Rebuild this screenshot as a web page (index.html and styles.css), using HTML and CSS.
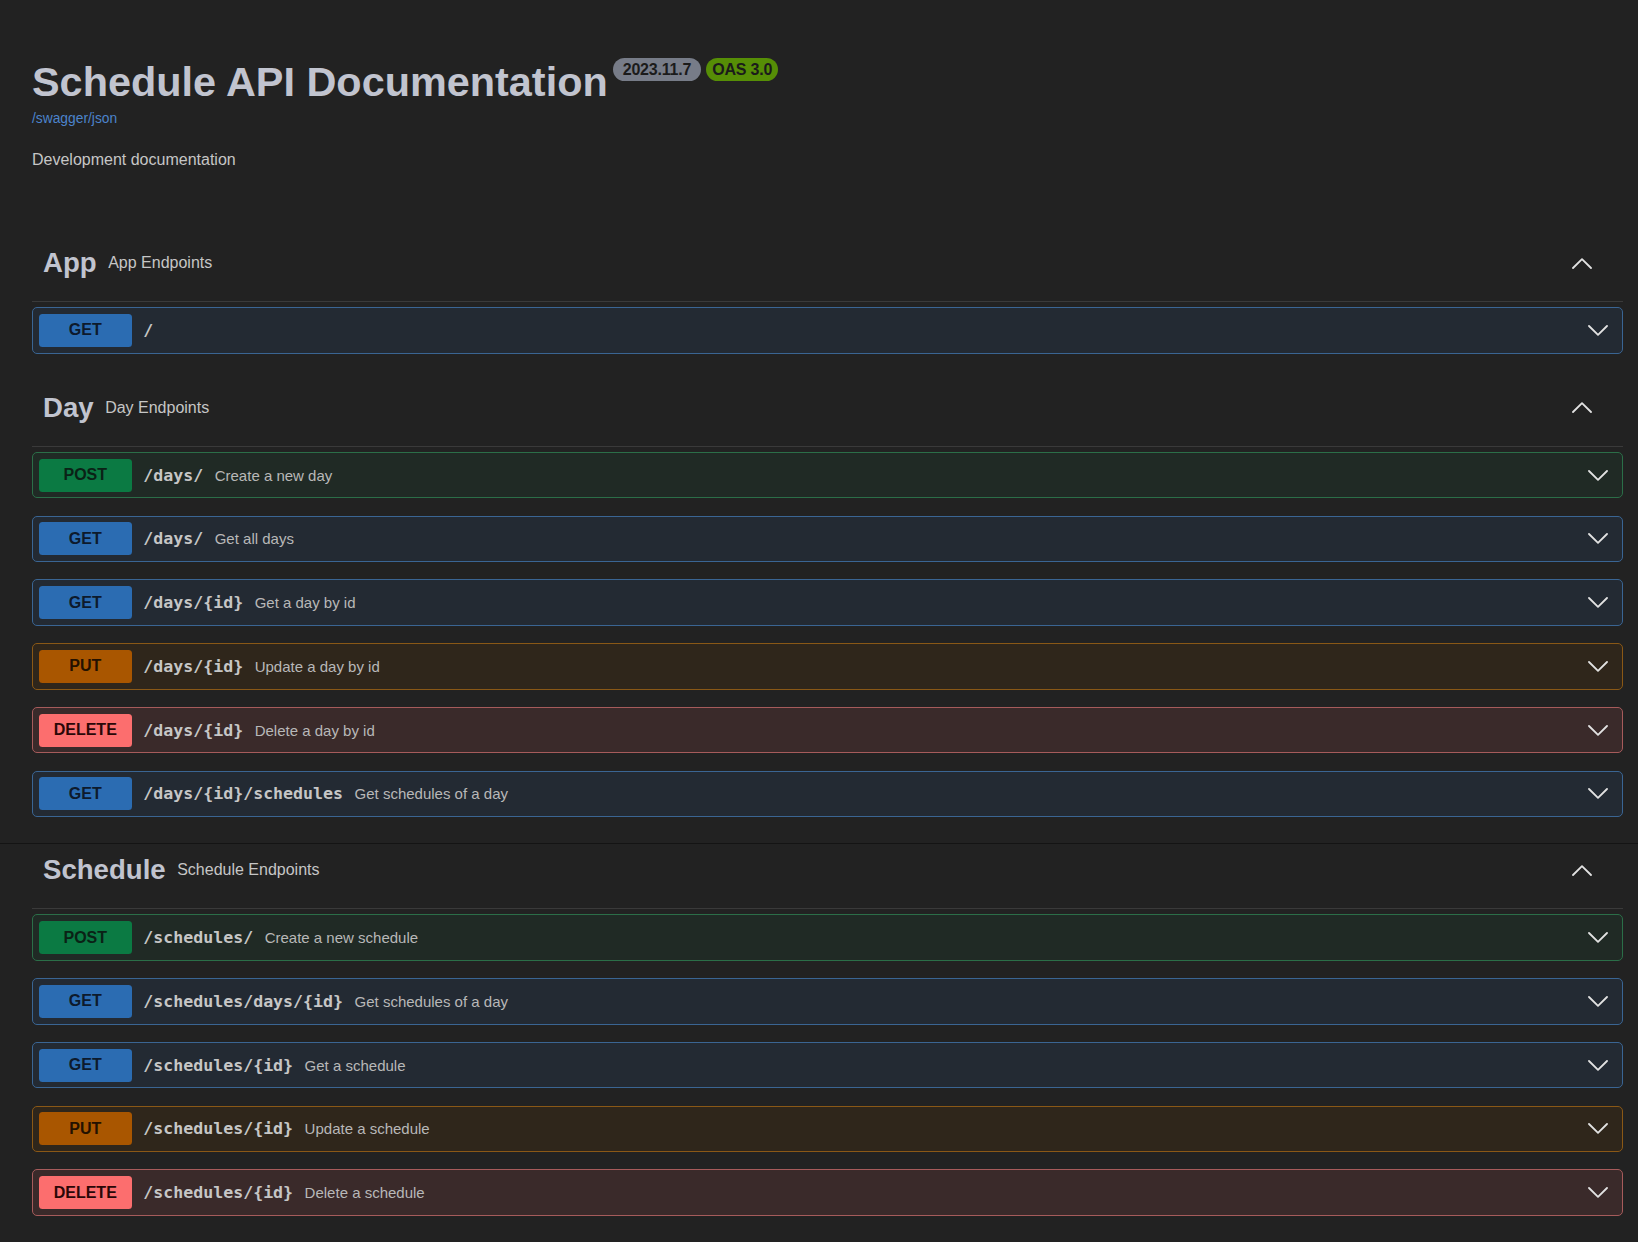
FILE: index.html
```html
<!DOCTYPE html>
<html lang="en">
<head>
<meta charset="utf-8">
<title>Schedule API Documentation</title>
<link rel="stylesheet" href="styles.css">
</head>
<body>
<div class="page">
  <section class="info">
    <div class="title-row">
      <h1 class="title">Schedule API Documentation</h1>
      <span class="pill pill-version">2023.11.7</span>
      <span class="pill pill-oas">OAS 3.0</span>
    </div>
    <a class="spec-link" href="#">/swagger/json</a>
    <p class="desc">Development documentation</p>
  </section>

  <section class="tag">
    <div class="tag-header">
      <h3 class="tag-name">App</h3>
      <span class="tag-desc">App Endpoints</span>
      <svg class="tag-arrow" viewBox="0 0 20 11"><polyline points="1,10 10,1.2 19,10"/></svg>
    </div>
    <div class="op op-get"><span class="method">GET</span><span class="path">/</span><span class="summary"></span><svg class="op-arrow" viewBox="0 0 20 11"><polyline points="1,1 10,9.8 19,1"/></svg></div>
  </section>

  <section class="tag">
    <div class="tag-header">
      <h3 class="tag-name">Day</h3>
      <span class="tag-desc">Day Endpoints</span>
      <svg class="tag-arrow" viewBox="0 0 20 11"><polyline points="1,10 10,1.2 19,10"/></svg>
    </div>
    <div class="op op-post"><span class="method">POST</span><span class="path">/days/</span><span class="summary">Create a new day</span><svg class="op-arrow" viewBox="0 0 20 11"><polyline points="1,1 10,9.8 19,1"/></svg></div>
    <div class="op op-get"><span class="method">GET</span><span class="path">/days/</span><span class="summary">Get all days</span><svg class="op-arrow" viewBox="0 0 20 11"><polyline points="1,1 10,9.8 19,1"/></svg></div>
    <div class="op op-get"><span class="method">GET</span><span class="path">/days/{id}</span><span class="summary">Get a day by id</span><svg class="op-arrow" viewBox="0 0 20 11"><polyline points="1,1 10,9.8 19,1"/></svg></div>
    <div class="op op-put"><span class="method">PUT</span><span class="path">/days/{id}</span><span class="summary">Update a day by id</span><svg class="op-arrow" viewBox="0 0 20 11"><polyline points="1,1 10,9.8 19,1"/></svg></div>
    <div class="op op-delete"><span class="method">DELETE</span><span class="path">/days/{id}</span><span class="summary">Delete a day by id</span><svg class="op-arrow" viewBox="0 0 20 11"><polyline points="1,1 10,9.8 19,1"/></svg></div>
    <div class="op op-get"><span class="method">GET</span><span class="path">/days/{id}/schedules</span><span class="summary">Get schedules of a day</span><svg class="op-arrow" viewBox="0 0 20 11"><polyline points="1,1 10,9.8 19,1"/></svg></div>
  </section>

  <div class="divider"></div>

  <section class="tag">
    <div class="tag-header tag-header-compact">
      <h3 class="tag-name">Schedule</h3>
      <span class="tag-desc">Schedule Endpoints</span>
      <svg class="tag-arrow" viewBox="0 0 20 11"><polyline points="1,10 10,1.2 19,10"/></svg>
    </div>
    <div class="op op-post"><span class="method">POST</span><span class="path">/schedules/</span><span class="summary">Create a new schedule</span><svg class="op-arrow" viewBox="0 0 20 11"><polyline points="1,1 10,9.8 19,1"/></svg></div>
    <div class="op op-get"><span class="method">GET</span><span class="path">/schedules/days/{id}</span><span class="summary">Get schedules of a day</span><svg class="op-arrow" viewBox="0 0 20 11"><polyline points="1,1 10,9.8 19,1"/></svg></div>
    <div class="op op-get"><span class="method">GET</span><span class="path">/schedules/{id}</span><span class="summary">Get a schedule</span><svg class="op-arrow" viewBox="0 0 20 11"><polyline points="1,1 10,9.8 19,1"/></svg></div>
    <div class="op op-put"><span class="method">PUT</span><span class="path">/schedules/{id}</span><span class="summary">Update a schedule</span><svg class="op-arrow" viewBox="0 0 20 11"><polyline points="1,1 10,9.8 19,1"/></svg></div>
    <div class="op op-delete"><span class="method">DELETE</span><span class="path">/schedules/{id}</span><span class="summary">Delete a schedule</span><svg class="op-arrow" viewBox="0 0 20 11"><polyline points="1,1 10,9.8 19,1"/></svg></div>
  </section>
</div>
</body>
</html>
```

FILE: styles.css
```css
html, body {
  margin: 0;
  background: #222222;
}

body {
  font-family: "Liberation Sans", Arial, sans-serif;
  color: #c4c4c4;
}

.page {
  padding: 0 15px 30px 32px;
}

/* ---------- info ---------- */
.info {
  padding-top: 59px;
  margin-bottom: 57.5px;
}

.title-row {
  display: flex;
  align-items: flex-start;
}

.title {
  margin: 0;
  font-size: 41.4px;
  font-weight: 700;
  line-height: normal;
  color: #c1c4cf;
}

.pill {
  margin-top: -1px;
  margin-left: 6px;
  height: 23px;
  padding: 0 6px;
  border-radius: 12px;
  font-size: 16px;
  font-weight: 700;
  line-height: 23px;
  letter-spacing: -0.2px;
  color: #1b1b1b;
}

.pill-version {
  padding: 0 10px;
  margin-left: 5px;
  background: #777c88;
}

.pill-oas {
  margin-left: 5px;
  background: #568e06;
}

.spec-link {
  display: block;
  margin-top: 4.5px;
  font-size: 13.8px;
  line-height: normal;
  color: #4c84cc;
  text-decoration: none;
}

.desc {
  margin: 25px 0 0;
  font-size: 16px;
  line-height: normal;
  color: #c6c6c6;
}

/* ---------- tags ---------- */
.tag {
  display: flow-root;
}

.tag-header {
  box-sizing: border-box;
  display: flex;
  align-items: center;
  height: 76px;
  padding: 0 31px 1px 11px;
  border-bottom: 1px solid #3a3a3a;
  margin-bottom: 5px;
}

.tag-header-compact {
  height: 65.25px;
  padding-bottom: 12.25px;
}

.tag-name {
  margin: 0;
  font-size: 27.6px;
  font-weight: 700;
  line-height: normal;
  color: #c1c4cf;
}

.tag-desc {
  flex: 1;
  margin-left: 11.5px;
  font-size: 16px;
  color: #c6c6c6;
}

.tag-arrow,
.op-arrow {
  width: 20px;
  height: 11px;
  fill: none;
  stroke: #e2e2e2;
  stroke-width: 1.8;
  stroke-linecap: round;
  stroke-linejoin: round;
  flex: none;
}

.divider {
  height: 1px;
  background: #141414;
  margin: 8.75px -15px 0 -32px;
}

/* ---------- operations ---------- */
.op {
  display: flex;
  align-items: center;
  padding: 5.75px;
  border: 1px solid;
  border-radius: 5px;
  margin-bottom: 17.25px;
}

.method {
  flex: none;
  display: flex;
  align-items: center;
  justify-content: center;
  width: 93px;
  height: 33px;
  border-radius: 3.5px;
  font-size: 16px;
  font-weight: 700;
}

.path {
  padding: 0 11.5px;
  font-family: "DejaVu Sans Mono", "Liberation Mono", monospace;
  font-size: 16.6px;
  font-weight: 700;
  color: #c6c6c6;
  white-space: nowrap;
}

.summary {
  flex: 1;
  font-size: 15px;
  color: #b8b8b8;
  white-space: nowrap;
}

.op-arrow {
  margin-right: 8px;
}

.op-get {
  background: #232a33;
  border-color: #3a6593;
}
.op-get .method {
  background: #2b6cb2;
  color: #0d1a2c;
}

.op-post {
  background: #202a25;
  border-color: #2b6e48;
}
.op-post .method {
  background: #0b7a43;
  color: #0a2216;
}

.op-put {
  background: #2f261b;
  border-color: #8a5816;
}
.op-put .method {
  background: #a95600;
  color: #231100;
}

.op-delete {
  background: #3a2a2a;
  border-color: #a65b5b;
}
.op-delete .method {
  background: #fc6e6e;
  color: #2a0707;
}
```
